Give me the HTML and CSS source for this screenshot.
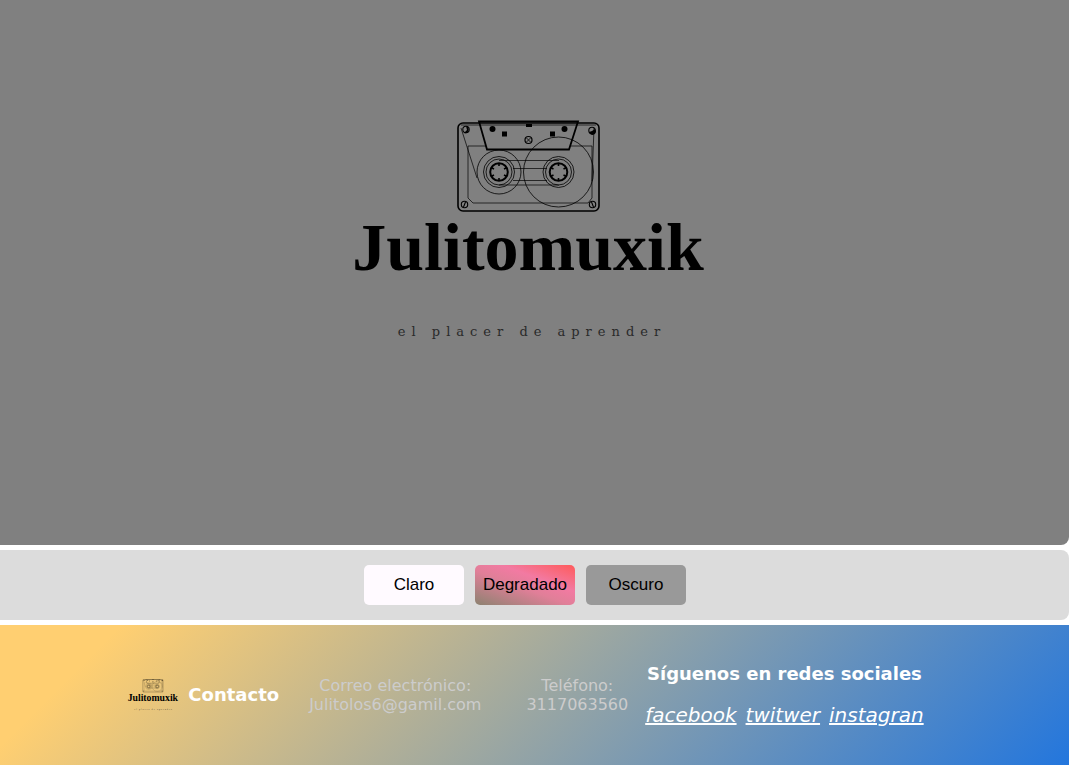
FILE: index.html
```html
<!DOCTYPE html>
<html lang="es">
<head>
<meta charset="utf-8">
<title>Julitomuxik</title>
<link rel="stylesheet" href="styles.css">
</head>
<body>
<header class="banner">
  <svg class="banner-logo" viewBox="0 0 360 230" role="img" aria-label="Julitomuxik, el placer de aprender">
    <g id="logo">
      <g fill="none" stroke="#000">
        <rect x="109" y="3" width="141" height="88" rx="5" stroke-width="1.6"/>
        <path d="M130 1.500H229L220 29.500H138Z" stroke-width="1.800"/>
        <path stroke-width=".7" d="M112 5H247M137 26H119V78L124 83H239L243 78V26H222M112 8L128 58M245 8L243 61M150 40.500H210M164 48.500H198M164 60.500H198M150 65H210"/>
        <g stroke-width=".8">
          <circle cx="150" cy="52" r="22"/>
          <circle cx="150" cy="52" r="15.500"/>
          <circle cx="150" cy="52" r="13"/>
          <circle cx="209.500" cy="52" r="35"/>
          <circle cx="209.500" cy="52" r="15.500"/>
          <circle cx="209.500" cy="52" r="13"/>
          <circle cx="179.500" cy="20" r="3.500" stroke-width="1.200"/>
          <path d="M177.500 18L181.500 22M181.500 18L177.500 22"/>
        </g>
        <g stroke-width="2">
          <circle cx="150" cy="52" r="8.800"/>
          <circle cx="209.500" cy="52" r="8.800"/>
        </g>
        <g stroke-width="1.600">
          <path d="M150 43V46M150 58V61M142 47.500L145 49M155 55L158 56.500M142 56.500L145 55M155 49L158 47.500"/>
          <path d="M209.500 43V46M209.500 58V61M201.500 47.500L204.500 49M214.500 55L217.500 56.500M201.500 56.500L204.500 55M214.500 49L217.500 47.500"/>
        </g>
        <g stroke-width="1.100">
          <circle cx="117" cy="9.500" r="3.200"/>
          <circle cx="243" cy="10.500" r="3.200"/>
          <circle cx="115.500" cy="84.500" r="3.200"/>
          <circle cx="243.500" cy="84.500" r="3.200"/>
          <path d="M116.500 82L114.500 87M242.500 82L244.500 87"/>
        </g>
      </g>
      <path d="M117 6A3.500 3.500 0 1 1 115 13L118 10ZM246 9A3.500 3.500 0 1 1 240 12L243 11ZM153 11.500H158V16.500H153ZM201 11.500H206V16.500H201ZM177 4H183V7H177Z"/>
      <circle cx="143.500" cy="9" r="3"/>
      <circle cx="215.500" cy="9" r="3"/>
      <text class="logo-name" x="179" y="150" text-anchor="middle">Julitomuxik</text>
      <text class="logo-tagline" x="183" y="216" text-anchor="middle">el placer de aprender</text>
    </g>
  </svg>
</header>
<nav class="themes" aria-label="Tema">
  <button class="theme theme-light" type="button">Claro</button>
  <button class="theme theme-gradient" type="button">Degradado</button>
  <button class="theme theme-dark" type="button">Oscuro</button>
</nav>
<footer class="footer">
  <div class="brand">
    <svg class="brand-logo" viewBox="0 0 360 230" role="img" aria-label="Julitomuxik"><use href="#logo"/></svg>
    <h2 class="heading">Contacto</h2>
  </div>
  <p class="detail detail-mail">Correo electrónico:<br>Julitolos6@gamil.com</p>
  <p class="detail detail-phone">Teléfono:<br>3117063560</p>
  <section class="social">
    <h2 class="heading">Síguenos en redes sociales</h2>
    <div class="links">
      <a href="#">facebook</a>
      <a href="#">twitwer</a>
      <a href="#">instagran</a>
    </div>
  </section>
</footer>
</body>
</html>
```
FILE: styles.css
```css
* { box-sizing: border-box; margin: 0; }

body {
  display: flex;
  flex-direction: column;
  gap: 5px;
  min-height: 100vh;
  padding-right: 1px;
  background: #fff;
  font-family: "DejaVu Sans", Verdana, sans-serif;
}

.logo-name { font: bold 68px "Liberation Serif", serif; }
.logo-tagline { font: 13px "DejaVu Serif", serif; letter-spacing: 6px; fill: #2a2a2a; }

.banner {
  display: flex;
  flex: 1;
  justify-content: center;
  padding: 120px 12px 120px 0;
  background: #808080;
  border-radius: 0 0 8px 0;
}

.banner-logo { width: 360px; height: 230px; }

.themes {
  display: flex;
  justify-content: center;
  gap: 11px;
  padding: 15px 19px 15px 0;
  background: #dcdcdc;
  border-radius: 0 8px 8px 0;
}

.theme {
  width: 100px;
  height: 40px;
  padding: 0;
  border: 0;
  border-radius: 5px;
  color: #000;
  font: 17px "Liberation Sans", Arial, sans-serif;
}

.theme-light { background: #fffaff; }
.theme-gradient { background: linear-gradient(20deg, #8c8270, #e07f98 45%, #f27aa2 65%, #ff5a5a); }
.theme-dark { background: #999; }

.footer {
  display: flex;
  align-items: center;
  justify-content: center;
  min-height: 140px;
  padding-right: 18px;
  background: linear-gradient(135deg, #ffcf71 10%, #2376dd 100%);
}

.brand { display: flex; align-items: center; gap: 9px; }
.brand-logo { width: 52px; height: 33px; }

.heading { color: #fff; font-size: 18px; line-height: 22px; }

.detail {
  color: #ccc;
  font-size: 16px;
  line-height: 19px;
  text-align: center;
}
.detail-mail { margin-left: 30px; }
.detail-phone { margin-left: 45px; }

.social { margin-left: 17px; text-align: center; }
.links { display: flex; justify-content: center; gap: 9px; margin-top: 18px; }
.links a { color: #fff; font-size: 20px; font-style: italic; line-height: 24px; }
```
